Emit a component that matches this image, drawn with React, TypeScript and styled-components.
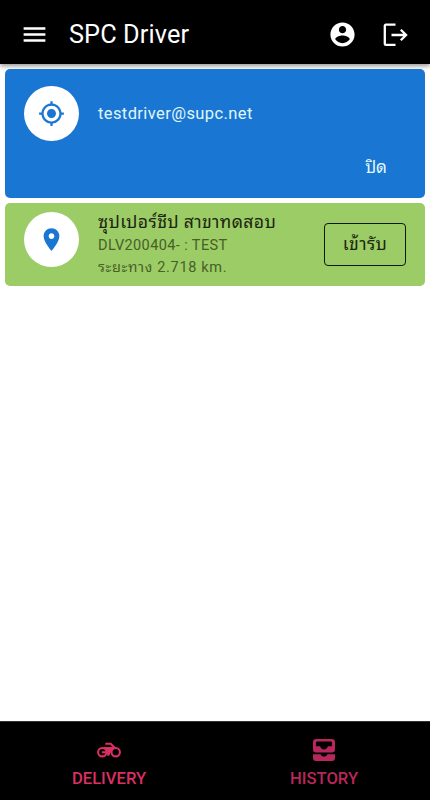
import React from "react";
import styled, { createGlobalStyle } from "styled-components";

const fontStack = `Roboto, "Noto Sans Thai Looped", "Noto Looped Thai", Loma, Waree, Garuda, "Droid Sans Thai", "Noto Sans Thai", "Noto Sans", sans-serif`;

const GlobalStyle = createGlobalStyle`
  * { box-sizing: border-box; }
  body { margin: 0; background: #fff; font-family: ${fontStack}; }
`;

const Screen = styled.div`
  display: flex;
  flex-direction: column;
  height: 100vh;
`;

const TopBar = styled.header`
  display: flex;
  align-items: center;
  flex: none;
  height: 64px;
  padding: 5px 22px 0 20px;
  background: #000;
  color: #fff;
  box-shadow: 0 2px 4px rgba(0, 0, 0, 0.3), 0 2px 6px rgba(0, 0, 0, 0.15);
`;

const Title = styled.h1`
  flex: 1;
  margin: 0 0 0 20px;
  font-size: 25.3px;
  line-height: 32px;
  font-weight: 400;
  letter-spacing: 0.1px;
  white-space: nowrap;
`;

const IconButton = styled.button`
  display: flex;
  padding: 0;
  border: 0;
  background: none;
  color: inherit;
  & + & { margin-left: 25px; }
`;

const Glyph = styled.svg<{ $size: number }>`
  display: block;
  width: ${(p) => p.$size}px;
  height: ${(p) => p.$size}px;
  fill: currentColor;
`;

const Content = styled.main`
  display: flex;
  flex: 1;
  flex-direction: column;
  gap: 5px;
  padding: 5px;
`;

const DriverCard = styled.section`
  display: flex;
  flex-direction: column;
  height: 129px;
  padding: 17px 19px 0;
  border-radius: 5px;
  background: #1976d2;
  color: #e0f7fa;
`;

const DriverRow = styled.div`
  display: flex;
  align-items: center;
`;

const Avatar = styled.div`
  display: flex;
  align-items: center;
  justify-content: center;
  flex: none;
  width: 55px;
  height: 55px;
  margin-right: 19px;
  border-radius: 50%;
  background: #fff;
  color: #1976d2;
`;

const Email = styled.span`
  font-size: 16.5px;
  line-height: 22px;
  letter-spacing: 0.4px;
`;

const CloseButton = styled.button`
  align-self: flex-end;
  margin: 12px 19px 0 0;
  padding: 0;
  border: 0;
  background: none;
  color: inherit;
  font: 400 17px/28px ${fontStack};
`;

const OrderCard = styled.section`
  display: flex;
  height: 83px;
  padding: 9px 19px 0;
  border-radius: 5px;
  background: #9ccc65;
`;

const OrderText = styled.div`
  flex: 1;
  white-space: nowrap;
`;

const Branch = styled.div`
  height: 22px;
  font-size: 17.6px;
  line-height: 21px;
  letter-spacing: 0.36px;
  color: #1b2610;
`;

const Detail = styled.div<{ $spacing: number }>`
  height: 22px;
  font-size: 14.5px;
  line-height: 23px;
  letter-spacing: ${(p) => p.$spacing}px;
  color: #476027;
`;

const AcceptButton = styled.button`
  width: 82px;
  height: 43px;
  margin-top: 11px;
  padding: 0 0 2px;
  border: 1px solid #10180a;
  border-radius: 4px;
  background: none;
  color: #1b2610;
  font: 400 17.5px/26px ${fontStack};
  letter-spacing: 0.4px;
`;

const BottomNav = styled.nav`
  display: grid;
  grid-template-columns: 1fr 1fr;
  flex: none;
  height: 79px;
  padding-left: 2px;
  background: #000;
  border-top: 1px solid #333;
`;

const Tab = styled.button<{ $color: string }>`
  display: flex;
  flex-direction: column;
  align-items: center;
  padding: 14px 0 0;
  border: 0;
  background: none;
  color: ${(p) => p.$color};
  font: 500 16.6px/21px ${fontStack};
  & + & { padding-left: 2px; }
`;

const TabIcon = styled.span`
  display: flex;
  align-items: center;
  justify-content: center;
  height: 28px;
  margin-bottom: 4px;
`;

const INBOX =
  "M4 1h16A3 3 0 0 1 23 4V11.500a3 3 0 0 1-3 3H4A3 3 0 0 1 1 11.500V4A3 3 0 0 1 4 1zm1.100 2.500a1 1 0 0 0-1 1V8.300H8.200c.3 1.900 1.900 3.200 3.800 3.200s3.500-1.300 3.800-3.200h4.100V4.500a1 1 0 0 0-1-1zM1 16.200h7.600c.6 1.500 1.800 2.300 3.400 2.300s2.800-.8 3.400-2.300H23V20a3 3 0 0 1-3 3H4A3 3 0 0 1 1 20z";
const ACCOUNT =
  "M12 2C6.48 2 2 6.48 2 12s4.48 10 10 10 10-4.48 10-10S17.52 2 12 2zm0 3c1.66 0 3 1.34 3 3s-1.34 3-3 3-3-1.34-3-3 1.34-3 3-3zm0 14.2c-2.5 0-4.71-1.28-6-3.22.03-1.99 4-3.08 6-3.08 1.99 0 5.97 1.09 6 3.08-1.29 1.94-3.5 3.22-6 3.22z";
const LOCATION =
  "M12 8c-2.21 0-4 1.79-4 4s1.79 4 4 4 4-1.79 4-4-1.79-4-4-4zm8.94 3c-.46-4.17-3.77-7.48-7.94-7.94V1h-2v2.06C6.83 3.52 3.52 6.83 3.06 11H1v2h2.06c.46 4.17 3.77 7.48 7.94 7.94V23h2v-2.06c4.17-.46 7.48-3.77 7.94-7.94H23v-2h-2.06zM12 19c-3.87 0-7-3.13-7-7s3.13-7 7-7 7 3.13 7 7-3.13 7-7 7z";
const PLACE =
  "M12 2C8.13 2 5 5.13 5 9c0 5.25 7 13 7 13s7-7.75 7-13c0-3.87-3.13-7-7-7zm0 9.5c-1.38 0-2.5-1.12-2.5-2.5s1.12-2.5 2.5-2.5 2.5 1.12 2.5 2.5-1.12 2.5-2.5 2.5z";

const Icon = ({ d, size }: { d: string; size: number }) => (
  <Glyph $size={size} viewBox="0 0 24 24" aria-hidden="true">
    <path d={d} fillRule="evenodd" />
  </Glyph>
);

const LogoutIcon = () => (
  <Glyph $size={26} viewBox="0 0 26 26" aria-hidden="true">
    <g fill="none" stroke="currentColor" strokeWidth="2.3">
      <path d="M13.500 2.700H3.800a1 1 0 0 0-1 1v18.200a1 1 0 0 0 1 1h9.700" />
      <path d="M9.500 13H24M18.800 7.700l5.300 5.300-5.300 5.300" />
    </g>
  </Glyph>
);

const MotorcycleIcon = () => (
  <Glyph $size={24} viewBox="0 0 24 24" aria-hidden="true">
    <g fill="none" stroke="currentColor" strokeWidth="2.1">
      <circle cx="5.300" cy="14.200" r="4.200" />
      <circle cx="18.700" cy="14.200" r="4.200" />
      <path d="M8.300 5.800h5.400l4.800 4.600M4.800 14.200h5" />
    </g>
    <path d="M5 9h11l1.500 1.500-3.500 3.200-1.800 4h-2L10 14.500 8 10.500z" />
  </Glyph>
);

export default function App() {
  return (
    <>
      <GlobalStyle />
      <Screen>
        <TopBar>
          <IconButton aria-label="Menu">
            <Icon size={29} d="M3 18h18v-2H3v2zm0-5h18v-2H3v2zm0-7v2h18V6H3z" />
          </IconButton>
          <Title>SPC Driver</Title>
          <IconButton aria-label="Account">
            <Icon size={29} d={ACCOUNT} />
          </IconButton>
          <IconButton aria-label="Log out">
            <LogoutIcon />
          </IconButton>
        </TopBar>
        <Content>
          <DriverCard>
            <DriverRow>
              <Avatar>
                <Icon size={27} d={LOCATION} />
              </Avatar>
              <Email>testdriver@supc.net</Email>
            </DriverRow>
            <CloseButton>ปิด</CloseButton>
          </DriverCard>
          <OrderCard>
            <Avatar>
              <Icon size={27} d={PLACE} />
            </Avatar>
            <OrderText>
              <Branch>ซุปเปอร์ชีป สาขาทดสอบ</Branch>
              <Detail $spacing={0.4}>DLV200404- : TEST</Detail>
              <Detail $spacing={0.66}>ระยะทาง 2.718 km.</Detail>
            </OrderText>
            <AcceptButton>เข้ารับ</AcceptButton>
          </OrderCard>
        </Content>
        <BottomNav>
          <Tab $color="#d92f62">
            <TabIcon>
              <MotorcycleIcon />
            </TabIcon>
            DELIVERY
          </Tab>
          <Tab $color="#b8275b">
            <TabIcon>
              <Icon size={24} d={INBOX} />
            </TabIcon>
            HISTORY
          </Tab>
        </BottomNav>
      </Screen>
    </>
  );
}
